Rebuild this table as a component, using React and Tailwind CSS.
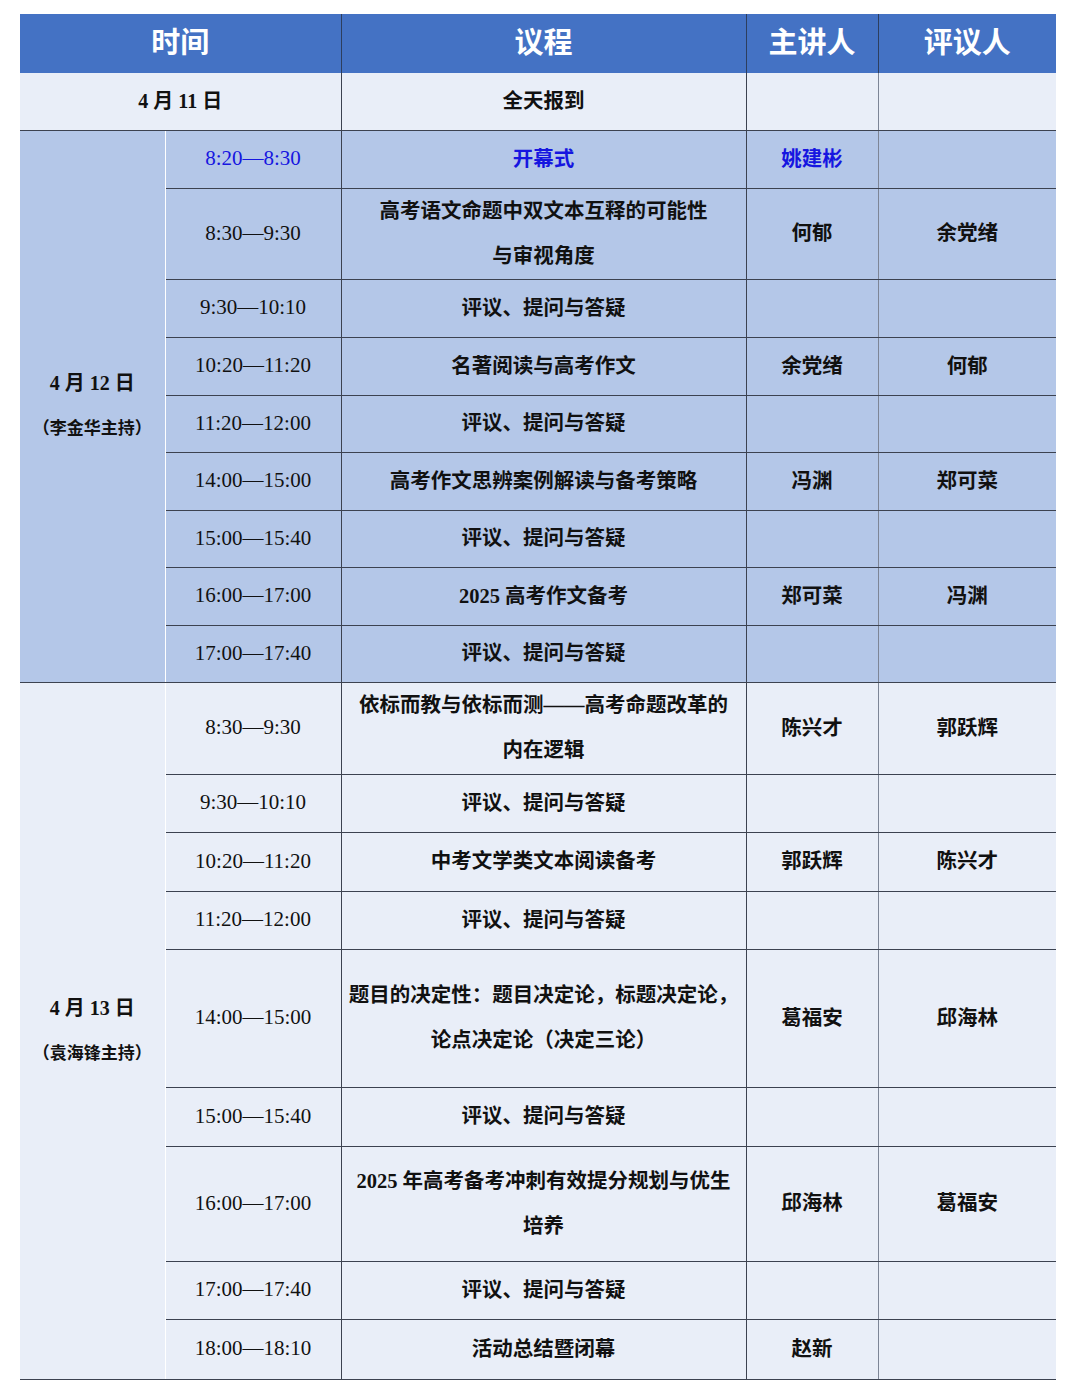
import React from "react";

const SERIF = { fontFamily: '"Liberation Serif", "Noto Sans CJK SC", serif' };

const day12 = [
  { t: "8:20—8:30", a: ["开幕式"], s: "姚建彬", r: "", h: 58, blue: true },
  { t: "8:30—9:30", a: ["高考语文命题中双文本互释的可能性", "与审视角度"], s: "何郁", r: "余党绪", h: 91 },
  { t: "9:30—10:10", a: ["评议、提问与答疑"], s: "", r: "", h: 58 },
  { t: "10:20—11:20", a: ["名著阅读与高考作文"], s: "余党绪", r: "何郁", h: 58 },
  { t: "11:20—12:00", a: ["评议、提问与答疑"], s: "", r: "", h: 57 },
  { t: "14:00—15:00", a: ["高考作文思辨案例解读与备考策略"], s: "冯渊", r: "郑可菜", h: 58 },
  { t: "15:00—15:40", a: ["评议、提问与答疑"], s: "", r: "", h: 57 },
  { t: "16:00—17:00", a: ["2025 高考作文备考"], s: "郑可菜", r: "冯渊", h: 58 },
  { t: "17:00—17:40", a: ["评议、提问与答疑"], s: "", r: "", h: 57 },
];

const day13 = [
  { t: "8:30—9:30", a: ["依标而教与依标而测——高考命题改革的", "内在逻辑"], s: "陈兴才", r: "郭跃辉", h: 92 },
  { t: "9:30—10:10", a: ["评议、提问与答疑"], s: "", r: "", h: 58 },
  { t: "10:20—11:20", a: ["中考文学类文本阅读备考"], s: "郭跃辉", r: "陈兴才", h: 59 },
  { t: "11:20—12:00", a: ["评议、提问与答疑"], s: "", r: "", h: 58 },
  { t: "14:00—15:00", a: ["题目的决定性：题目决定论，标题决定论，", "论点决定论（决定三论）"], s: "葛福安", r: "邱海林", h: 138 },
  { t: "15:00—15:40", a: ["评议、提问与答疑"], s: "", r: "", h: 59 },
  { t: "16:00—17:00", a: ["2025 年高考备考冲刺有效提分规划与优生", "培养"], s: "邱海林", r: "葛福安", h: 115 },
  { t: "17:00—17:40", a: ["评议、提问与答疑"], s: "", r: "", h: 58 },
  { t: "18:00—18:10", a: ["活动总结暨闭幕"], s: "赵新", r: "", h: 60 },
];

const cellB = "border-b border-[#3c4250] text-center align-middle p-0";

function Rows({ data, bg, dateTop, dateSub }) {
  return data.map((row, i) => {
    const color = row.blue ? "text-[#1616e0]" : "text-[#111]";
    return (
      <tr key={i} className={bg} style={{ height: row.h }}>
        {i === 0 && (
          <td
            rowSpan={data.length}
            className={`${cellB} border-r border-r-white font-bold text-[#111]`}
          >
            <div className="text-[20px] leading-[46px]">{dateTop}</div>
            <div className="text-[17px] leading-[46px]">{dateSub}</div>
          </td>
        )}
        <td className={`${cellB} border-r border-r-[#3c4250] text-[21px] ${color}`}>
          {row.t}
        </td>
        <td className={`${cellB} border-r border-r-[#3c4250] text-[20.5px] font-bold leading-[45px] ${color}`}>
          {row.a.map((l, k) => (
            <div key={k} className="whitespace-nowrap">{l}</div>
          ))}
        </td>
        <td className={`${cellB} border-r border-r-[#7d8596] text-[20.5px] font-bold ${color}`}>
          {row.s}
        </td>
        <td className={`${cellB} text-[20.5px] font-bold text-[#111]`}>{row.r}</td>
      </tr>
    );
  });
}

export default function App() {
  return (
    <div
      className="w-[1080px] h-[1393px] bg-white pt-[14px] pl-[20px] [text-spacing-trim:space-all]"
      style={SERIF}
    >
      <table className="w-[1036px] border-collapse table-fixed">
        <colgroup>
          <col style={{ width: 145 }} />
          <col style={{ width: 176 }} />
          <col style={{ width: 405 }} />
          <col style={{ width: 132 }} />
          <col style={{ width: 178 }} />
        </colgroup>
        <tbody>
          <tr className="bg-[#4472c4] h-[59px] text-white text-[29px] font-bold">
            <td colSpan={2} className="text-center align-middle border-r border-r-[#2d3e5e] p-0">时间</td>
            <td className="text-center align-middle border-r border-r-[#2d3e5e] p-0">议程</td>
            <td className="text-center align-middle border-r border-r-[#2d3e5e] p-0">主讲人</td>
            <td className="text-center align-middle p-0">评议人</td>
          </tr>
          <tr className="bg-[#e9eef8] h-[57px] text-[20px] font-bold text-[#111]">
            <td colSpan={2} className={`${cellB} border-r border-r-[#3c4250]`}>4 月 11 日</td>
            <td className={`${cellB} border-r border-r-[#3c4250] text-[20.5px]`}>全天报到</td>
            <td className={`${cellB} border-r border-r-[#7d8596]`}></td>
            <td className={cellB}></td>
          </tr>
          <Rows data={day12} bg="bg-[#b4c7e8]" dateTop="4 月 12 日" dateSub="（李金华主持）" />
          <Rows data={day13} bg="bg-[#e9eef8]" dateTop="4 月 13 日" dateSub="（袁海锋主持）" />
        </tbody>
      </table>
    </div>
  );
}
